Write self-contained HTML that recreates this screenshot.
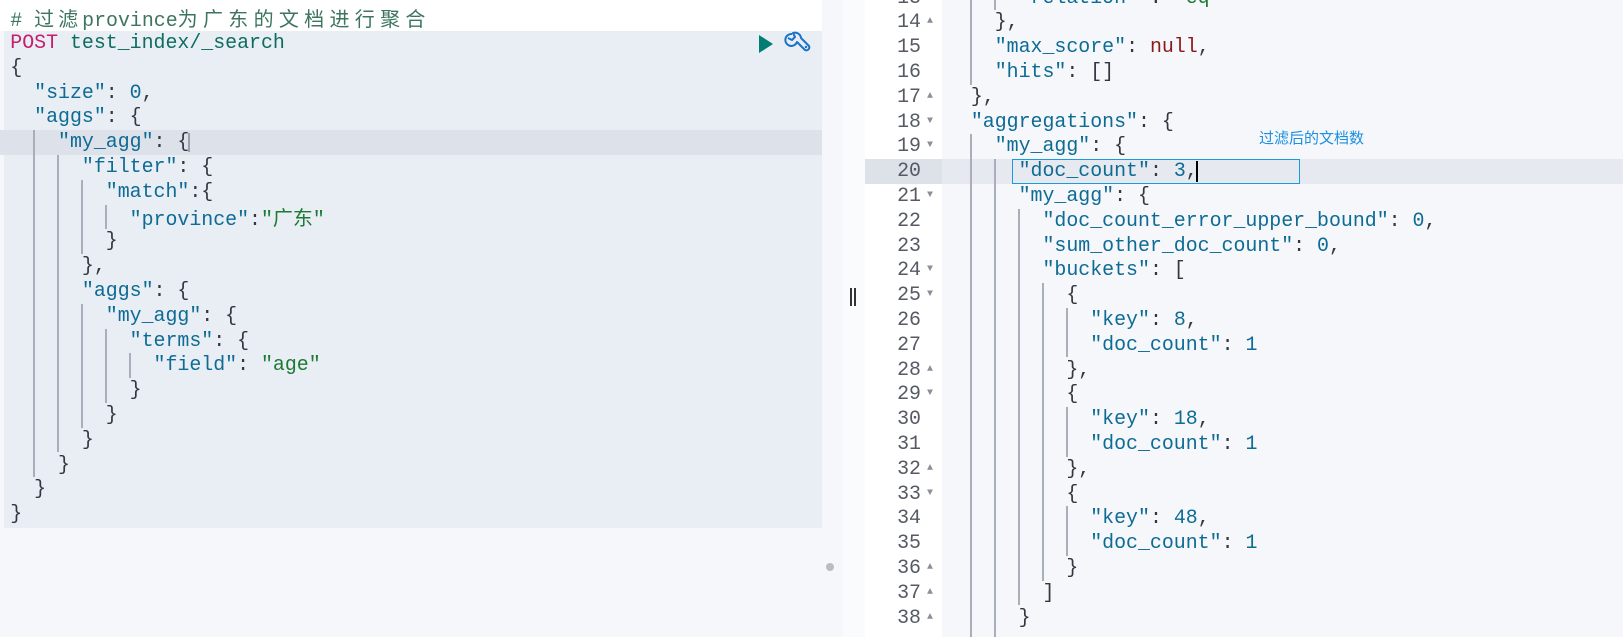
<!DOCTYPE html>
<html><head><meta charset="utf-8"><style>
*{margin:0;padding:0;box-sizing:border-box}
body{width:1623px;height:637px;overflow:hidden;background:#fff;position:relative;font-family:"Liberation Mono","Noto Sans CJK SC",monospace;font-size:19.9px;color:#343741}
.a{position:absolute}
.l{position:absolute;height:24.8px;line-height:24.8px;white-space:pre}
.k{color:#0d6b94}.s{color:#1d7a35}.n{color:#0d6b94}.nl{color:#8b1a1a}
.g{position:absolute;width:2px;background:#a8afba}
.ln{position:absolute;left:865px;width:56px;text-align:right;height:24.8px;line-height:24.8px;color:#555a63}
.ar{position:absolute;left:927px;font-size:10px;color:#8a8f98;height:24.8px;line-height:24.8px}
.cj{font-family:"Noto Sans CJK SC",sans-serif;font-size:20px}
</style></head><body>
<div class="a" style="left:0;top:0;width:843px;height:637px;background:#f5f7fa"></div>
<div class="a" style="left:0;top:0;width:822px;height:31px;background:#fff"></div>
<div class="a" style="left:4px;top:31px;width:818px;height:497px;background:#e9edf4"></div>
<div class="a" style="left:0;top:130.1px;width:822px;height:24.8px;background:#dce1ea"></div>
<div class="a" style="left:843px;top:0;width:22px;height:637px;background:#fafbfd"></div>
<div class="a" style="left:850px;top:288px;width:2px;height:18px;background:#333"></div>
<div class="a" style="left:854px;top:288px;width:2px;height:18px;background:#333"></div>
<div class="a" style="left:826px;top:563px;width:8px;height:8px;border-radius:50%;background:#b8bcc3"></div>
<div class="a" style="left:865px;top:0;width:77px;height:637px;background:#fff"></div>
<div class="a" style="left:942px;top:0;width:681px;height:637px;background:#f5f7fa"></div>
<div class="a" style="left:865px;top:159.1px;width:77px;height:24.8px;background:#dde1e8"></div>
<div class="a" style="left:942px;top:159.1px;width:681px;height:24.8px;background:#e6e9ef"></div>

<div class="g" style="left:33px;top:130.1px;height:347.2px"></div>
<div class="g" style="left:57px;top:154.9px;height:297.6px"></div>
<div class="g" style="left:81px;top:179.7px;height:74.4px"></div>
<div class="g" style="left:81px;top:303.7px;height:124px"></div>
<div class="g" style="left:105px;top:204.5px;height:24.8px"></div>
<div class="g" style="left:105px;top:328.5px;height:74.4px"></div>
<div class="g" style="left:129px;top:353.3px;height:24.8px"></div>

<div class="l" style="left:10.3px;top:6.1px;color:#3d7560"># <span class="cj" style="letter-spacing:4px">过滤</span>province<span class="cj" style="letter-spacing:5.3px">为广东的文档进行聚合</span></div>
<div class="l" style="left:10.3px;top:30.9px"><span style="color:#c61e6c">POST</span> <span style="color:#0d6e60">test_index/_search</span></div>
<div class="l" style="left:10.3px;top:55.7px">{</div>
<div class="l" style="left:10.3px;top:80.5px">  <span class="k">"size"</span>: <span class="n">0</span>,</div>
<div class="l" style="left:10.3px;top:105.3px">  <span class="k">"aggs"</span>: {</div>
<div class="l" style="left:10.3px;top:130.1px">    <span class="k">"my_agg"</span>: {</div>
<div class="a" style="left:188px;top:133px;width:2px;height:19px;background:#9aa0aa"></div>
<div class="l" style="left:10.3px;top:154.9px">      <span class="k">"filter"</span>: {</div>
<div class="l" style="left:10.3px;top:179.7px">        <span class="k">"match"</span>:{</div>
<div class="l" style="left:10.3px;top:204.5px">          <span class="k">"province"</span>:<span class="s">"<span class="cj">广东</span>"</span></div>
<div class="l" style="left:10.3px;top:229.3px">        }</div>
<div class="l" style="left:10.3px;top:254.1px">      },</div>
<div class="l" style="left:10.3px;top:278.9px">      <span class="k">"aggs"</span>: {</div>
<div class="l" style="left:10.3px;top:303.7px">        <span class="k">"my_agg"</span>: {</div>
<div class="l" style="left:10.3px;top:328.5px">          <span class="k">"terms"</span>: {</div>
<div class="l" style="left:10.3px;top:353.3px">            <span class="k">"field"</span>: <span class="s">"age"</span></div>
<div class="l" style="left:10.3px;top:378.1px">          }</div>
<div class="l" style="left:10.3px;top:402.9px">        }</div>
<div class="l" style="left:10.3px;top:427.7px">      }</div>
<div class="l" style="left:10.3px;top:452.5px">    }</div>
<div class="l" style="left:10.3px;top:477.3px">  }</div>
<div class="l" style="left:10.3px;top:502.1px">}</div>

<svg class="a" style="left:758px;top:34px" width="16" height="20" viewBox="0 0 16 20"><path d="M1 1 L15 10 L1 19 Z" fill="#017d73"/></svg>
<svg class="a" style="left:784px;top:31px" width="28" height="26" viewBox="0 0 28 26"><path d="M8 3 A6 6 0 1 0 13 11 L21 19 A3 3 0 0 0 25 15 L17 7 A6 6 0 0 0 9 2 L11 6 L8 9 L4 7" fill="none" stroke="#1a73c8" stroke-width="2" stroke-linejoin="round"/><circle cx="22" cy="16" r="1.2" fill="#1a73c8"/></svg>

<div class="g" style="left:970px;top:0;height:84.7px"></div>
<div class="g" style="left:970px;top:134.3px;height:503px"></div>
<div class="g" style="left:994px;top:0;height:10.3px"></div>
<div class="g" style="left:994px;top:159.1px;height:478px"></div>
<div class="g" style="left:1018px;top:208.7px;height:396.8px"></div>
<div class="g" style="left:1042px;top:283.1px;height:297.6px"></div>
<div class="g" style="left:1066px;top:307.9px;height:49.6px"></div>
<div class="g" style="left:1066px;top:407.1px;height:49.6px"></div>
<div class="g" style="left:1066px;top:506.3px;height:49.6px"></div>

<div class="ln" style="top:-14.5px">13</div>
<div class="ln" style="top:10.3px">14</div><div class="ar" style="top:10.3px">▲</div>
<div class="ln" style="top:35.1px">15</div>
<div class="ln" style="top:59.9px">16</div>
<div class="ln" style="top:84.7px">17</div><div class="ar" style="top:84.7px">▲</div>
<div class="ln" style="top:109.5px">18</div><div class="ar" style="top:109.5px">▼</div>
<div class="ln" style="top:134.3px">19</div><div class="ar" style="top:134.3px">▼</div>
<div class="ln" style="top:159.1px">20</div>
<div class="ln" style="top:183.9px">21</div><div class="ar" style="top:183.9px">▼</div>
<div class="ln" style="top:208.7px">22</div>
<div class="ln" style="top:233.5px">23</div>
<div class="ln" style="top:258.3px">24</div><div class="ar" style="top:258.3px">▼</div>
<div class="ln" style="top:283.1px">25</div><div class="ar" style="top:283.1px">▼</div>
<div class="ln" style="top:307.9px">26</div>
<div class="ln" style="top:332.7px">27</div>
<div class="ln" style="top:357.5px">28</div><div class="ar" style="top:357.5px">▲</div>
<div class="ln" style="top:382.3px">29</div><div class="ar" style="top:382.3px">▼</div>
<div class="ln" style="top:407.1px">30</div>
<div class="ln" style="top:431.9px">31</div>
<div class="ln" style="top:456.7px">32</div><div class="ar" style="top:456.7px">▲</div>
<div class="ln" style="top:481.5px">33</div><div class="ar" style="top:481.5px">▼</div>
<div class="ln" style="top:506.3px">34</div>
<div class="ln" style="top:531.1px">35</div>
<div class="ln" style="top:555.9px">36</div><div class="ar" style="top:555.9px">▲</div>
<div class="ln" style="top:580.7px">37</div><div class="ar" style="top:580.7px">▲</div>
<div class="ln" style="top:605.5px">38</div><div class="ar" style="top:605.5px">▲</div>

<div class="l" style="left:947px;top:-14.5px">      <span class="k">"relation"</span> : <span class="s">"eq"</span></div>
<div class="l" style="left:947px;top:10.3px">    },</div>
<div class="l" style="left:947px;top:35.1px">    <span class="k">"max_score"</span>: <span class="nl">null</span>,</div>
<div class="l" style="left:947px;top:59.9px">    <span class="k">"hits"</span>: []</div>
<div class="l" style="left:947px;top:84.7px">  },</div>
<div class="l" style="left:947px;top:109.5px">  <span class="k">"aggregations"</span>: {</div>
<div class="l" style="left:947px;top:134.3px">    <span class="k">"my_agg"</span>: {</div>
<div class="l" style="left:947px;top:159.1px">      <span class="k">"doc_count"</span>: <span class="n">3</span>,</div>
<div class="a" style="left:1196px;top:161px;width:2px;height:21px;background:#000"></div>
<div class="l" style="left:947px;top:183.9px">      <span class="k">"my_agg"</span>: {</div>
<div class="l" style="left:947px;top:208.7px">        <span class="k">"doc_count_error_upper_bound"</span>: <span class="n">0</span>,</div>
<div class="l" style="left:947px;top:233.5px">        <span class="k">"sum_other_doc_count"</span>: <span class="n">0</span>,</div>
<div class="l" style="left:947px;top:258.3px">        <span class="k">"buckets"</span>: [</div>
<div class="l" style="left:947px;top:283.1px">          {</div>
<div class="l" style="left:947px;top:307.9px">            <span class="k">"key"</span>: <span class="n">8</span>,</div>
<div class="l" style="left:947px;top:332.7px">            <span class="k">"doc_count"</span>: <span class="n">1</span></div>
<div class="l" style="left:947px;top:357.5px">          },</div>
<div class="l" style="left:947px;top:382.3px">          {</div>
<div class="l" style="left:947px;top:407.1px">            <span class="k">"key"</span>: <span class="n">18</span>,</div>
<div class="l" style="left:947px;top:431.9px">            <span class="k">"doc_count"</span>: <span class="n">1</span></div>
<div class="l" style="left:947px;top:456.7px">          },</div>
<div class="l" style="left:947px;top:481.5px">          {</div>
<div class="l" style="left:947px;top:506.3px">            <span class="k">"key"</span>: <span class="n">48</span>,</div>
<div class="l" style="left:947px;top:531.1px">            <span class="k">"doc_count"</span>: <span class="n">1</span></div>
<div class="l" style="left:947px;top:555.9px">          }</div>
<div class="l" style="left:947px;top:580.7px">        ]</div>
<div class="l" style="left:947px;top:605.5px">      }</div>

<div class="a" style="left:1012px;top:159px;width:288px;height:25px;border:1.5px solid #1a9be0"></div>
<div class="a" style="left:1259px;top:127px;font-family:'Noto Sans CJK SC',sans-serif;font-size:15px;color:#1c8fe0;line-height:22px">过滤后的文档数</div>
</body></html>
